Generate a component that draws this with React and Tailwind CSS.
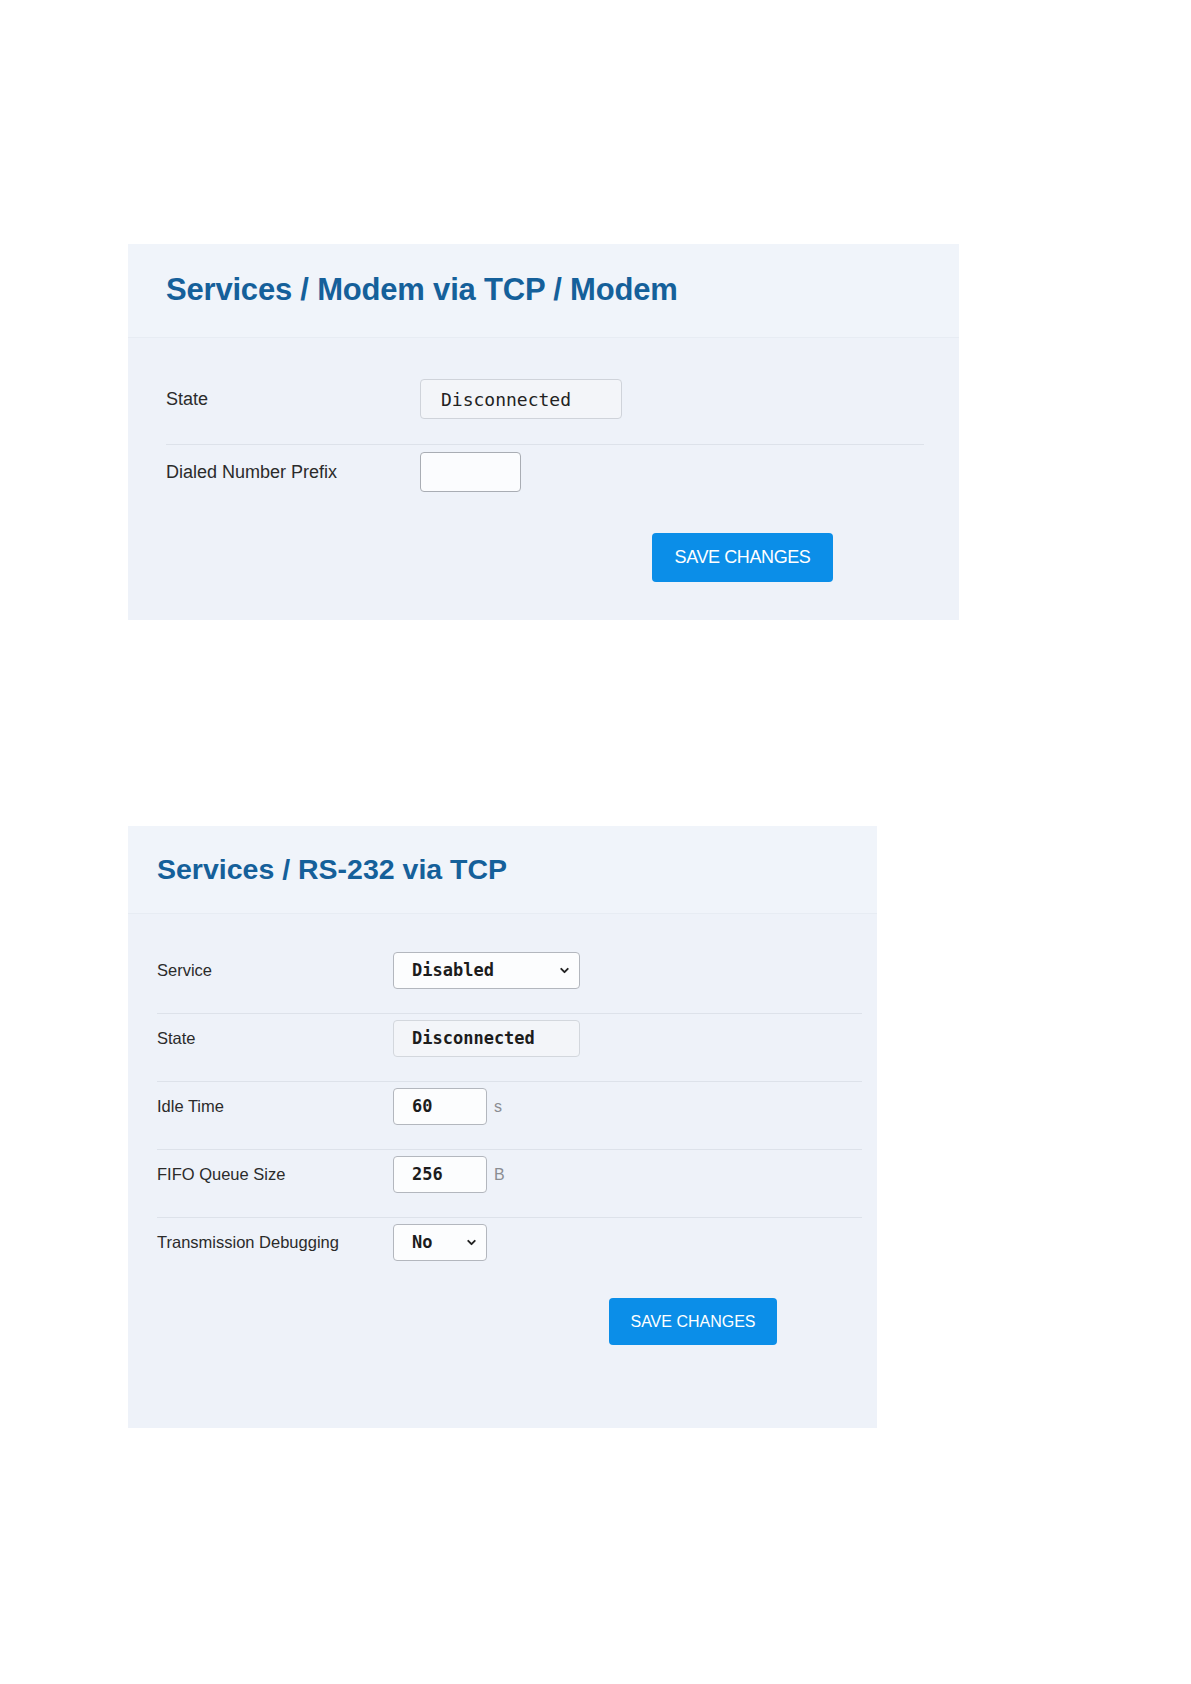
import React from 'react';
import { ChevronDown } from 'lucide-react';

const sans = "font-['Liberation_Sans',Arial,sans-serif]";
const mono = "font-['DejaVu_Sans_Mono','Liberation_Mono',monospace]";

function Row({ label, labelW, labelSize, first, pt = 'pt-[7px]', pb = 'pb-[25px]', children }) {
  return (
    <div className={`flex items-center ${first ? '' : 'border-t border-[#dde2ea]'} ${pt} ${pb}`}>
      <div className={`${labelW} ${labelSize} text-[#2b2b2b] shrink-0`}>{label}</div>
      <div className="flex items-center">{children}</div>
    </div>
  );
}

function ModemPanel() {
  return (
    <section className="w-[831px] bg-[#eef2f9]">
      <header className="h-[94px] flex items-center pl-[38px] bg-[#f0f4fa] border-b border-[#e7ecf3]">
        <h1 className={`${sans} text-[31px] font-bold text-[#15609a] tracking-[-0.2px]`}>
          Services / Modem via TCP / Modem
        </h1>
      </header>
      <div className="pl-[38px] pr-[35px] pt-[34px] pb-[38px]">
        <Row label="State" labelW="w-[254px]" labelSize="text-[18px]" first>
          <div className={`w-[202px] h-[40px] flex items-center pl-[20px] bg-[#f3f5f9] border border-[#cfd3da] rounded-[4px] ${mono} text-[18px] text-[#222]`}>
            Disconnected
          </div>
        </Row>
        <div className="flex items-center border-t border-[#dde2ea] pt-[7px]">
          <div className="w-[254px] text-[18px] text-[#2b2b2b] shrink-0">Dialed Number Prefix</div>
          <div className="w-[101px] h-[40px] bg-[#fbfcfe] border border-[#a9adb4] rounded-[4px]" />
        </div>
        <div className="mt-[41px] ml-[486px]">
          <button className={`w-[181px] h-[49px] bg-[#0b8ee8] rounded-[4px] text-white text-[18px] ${sans} tracking-[-0.4px]`}>
            SAVE CHANGES
          </button>
        </div>
      </div>
    </section>
  );
}

function Field({ w, children, select }) {
  return (
    <div className={`${w} h-[37px] flex items-center justify-between pl-[18px] pr-[8px] bg-[#fcfdfe] border border-[#b3b7be] rounded-[4px] ${mono} font-bold text-[17px] text-[#1c1c1c]`}>
      <span>{children}</span>
      {select && <ChevronDown size={13} strokeWidth={3.5} className="text-[#222]" />}
    </div>
  );
}

function Rs232Panel() {
  const labelW = 'w-[236px]';
  const labelSize = 'text-[16.5px]';
  return (
    <section className="w-[749px] bg-[#eef2f9]">
      <header className="h-[88px] flex items-center pl-[29px] bg-[#f0f4fa] border-b border-[#e7ecf3]">
        <h1 className={`${sans} text-[28.5px] font-bold text-[#15609a]`}>Services / RS-232 via TCP</h1>
      </header>
      <div className="pl-[29px] pr-[15px] pt-[31px] pb-[83px]">
        <Row label="Service" labelW={labelW} labelSize={labelSize} first pb="pb-[24px]">
          <Field w="w-[187px]" select>Disabled</Field>
        </Row>
        <Row label="State" labelW={labelW} labelSize={labelSize} pt="pt-[6px]" pb="pb-[24px]">
          <div className={`w-[187px] h-[37px] flex items-center pl-[18px] bg-[#f3f5f9] border border-[#d3d7dd] rounded-[4px] ${mono} font-bold text-[17px] text-[#1c1c1c]`}>
            Disconnected
          </div>
        </Row>
        <Row label="Idle Time" labelW={labelW} labelSize={labelSize} pt="pt-[6px]" pb="pb-[24px]">
          <Field w="w-[94px]">60</Field>
          <span className="ml-[7px] text-[16px] text-[#8a8d92]">s</span>
        </Row>
        <Row label="FIFO Queue Size" labelW={labelW} labelSize={labelSize} pt="pt-[6px]" pb="pb-[24px]">
          <Field w="w-[94px]">256</Field>
          <span className="ml-[7px] text-[16px] text-[#8a8d92]">B</span>
        </Row>
        <div className="flex items-center border-t border-[#dde2ea] pt-[6px]">
          <div className={`${labelW} ${labelSize} text-[#2b2b2b] shrink-0`}>Transmission Debugging</div>
          <Field w="w-[94px]" select>No</Field>
        </div>
        <div className="mt-[37px] ml-[452px]">
          <button className={`w-[168px] h-[47px] bg-[#0b8ee8] rounded-[4px] text-white text-[16px] ${sans}`}>
            SAVE CHANGES
          </button>
        </div>
      </div>
    </section>
  );
}

export default function App() {
  return (
    <div className={`min-h-screen bg-white ${sans} pl-[128px] pt-[244px] pb-[257px]`}>
      <ModemPanel />
      <div className="h-[206px]" />
      <Rs232Panel />
    </div>
  );
}
